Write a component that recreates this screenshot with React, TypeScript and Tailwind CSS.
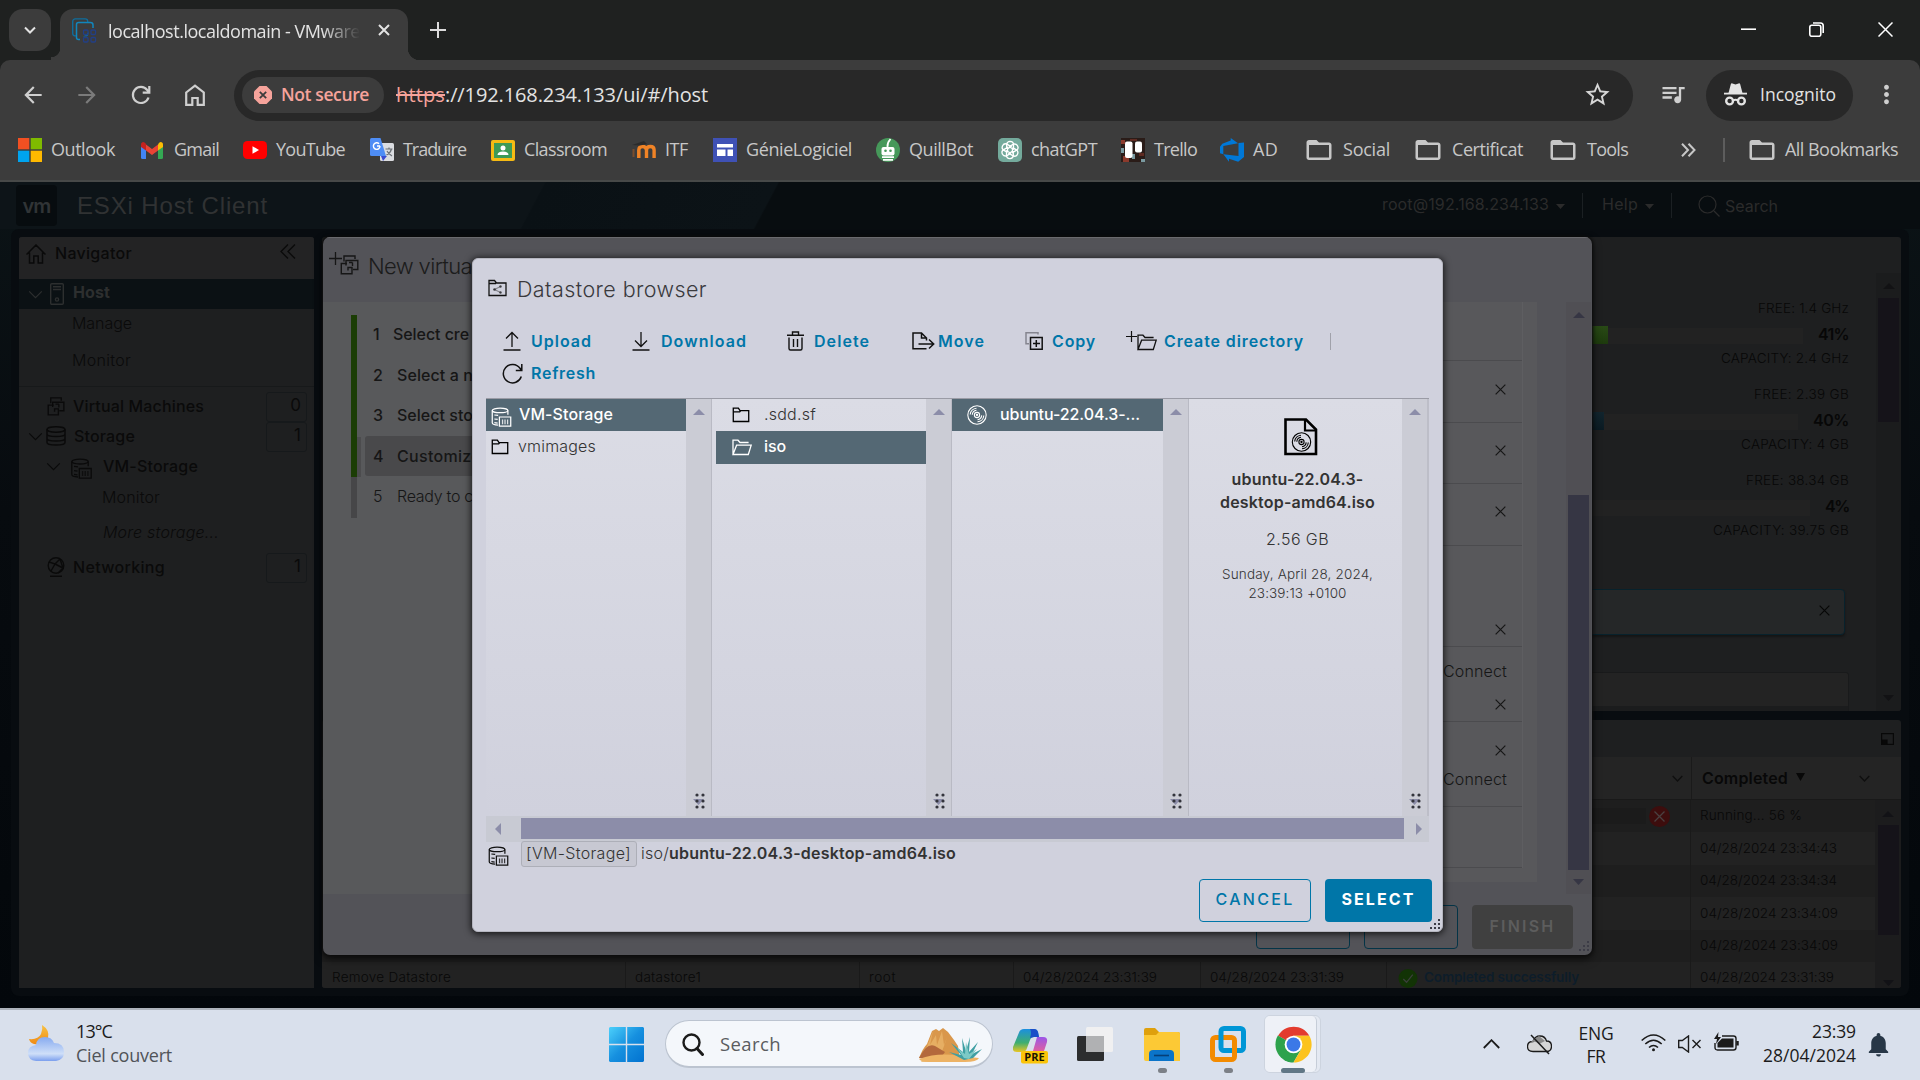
import React, { useLayoutEffect, useRef, useState } from "react";
import { MdArrowBack, MdArrowForward, MdQueueMusic, MdStarBorder, MdFolderOpen, MdMoreVert, MdNotifications } from "react-icons/md";

/* Single-line text tracked so that it spans exactly `w` pixels. */
function T({ w, className = "", children }: { w: number; className?: string; children: React.ReactNode }) {
  const ref = useRef<HTMLSpanElement>(null);
  const [ls, setLs] = useState(0);
  useLayoutEffect(() => {
    const el = ref.current;
    if (!el) return;
    el.style.letterSpacing = "0px";
    const n = (el.textContent || "").length;
    const d = (w - el.getBoundingClientRect().width) / n;
    el.style.letterSpacing = d + "px";
    setLs(d);
  }, [w]);
  return (
    <span ref={ref} className={"inline-block flex-none whitespace-nowrap leading-none " + className} style={{ letterSpacing: ls }}>
      {children}
    </span>
  );
}

type SvgProps = { className?: string; vb?: string; sw?: number; children: React.ReactNode };
function Ico({ className = "", vb = "0 0 20 20", sw = 1.3, children }: SvgProps) {
  return (
    <svg className={"flex-none " + className} viewBox={vb} fill="none" stroke="currentColor" strokeWidth={sw}>
      {children}
    </svg>
  );
}

const XMark = ({ className = "" }: { className?: string }) => (
  <Ico className={className} vb="0 0 12 12" sw={1.3}><path d="M.7.7 11.3 11.3M11.3.7.7 11.3" /></Ico>
);
const Up = ({ className = "" }: { className?: string }) => (
  <svg className={"h-[6px] w-[12px] flex-none " + className} viewBox="0 0 12 6" fill="currentColor"><path d="M6 0 12 6H0z" /></svg>
);
const Down = ({ className = "", size = "h-[6px] w-[11px]" }: { className?: string; size?: string }) => (
  <svg className={"flex-none " + size + " " + className} viewBox="0 0 12 6" preserveAspectRatio="none" fill="currentColor"><path d="M6 6 0 0h12z" /></svg>
);
const Chevron = ({ className = "", sw = 1.3 }: { className?: string; sw?: number }) => (
  <Ico className={className} vb="0 0 16 10" sw={sw}><path d="M1 1.5 8 8.5 15 1.5" /></Ico>
);
const FolderIcon = ({ className = "" }: { className?: string }) => (
  <Ico className={className} vb="0 0 18 17" sw={1.4}><path d="M.8 15.4V1.2h5.4l1.8 2.6h9.2v11.6z" /><path d="M1 5.2h6.6l1-1.3" /></Ico>
);
const OpenFolderIcon = ({ className = "" }: { className?: string }) => (
  <Ico className={className} vb="0 0 20 17" sw={1.3}><path d="M1 15.5V1.2h5l2 2.3h8.6M1 15.5 4.6 6.2h14.6L16.3 15.5z" /></Ico>
);
const DatastoreIcon = ({ className = "" }: { className?: string }) => (
  <Ico className={className} vb="0 0 21 21" sw={1.3}>
    <ellipse cx="9" cy="3.6" rx="8.2" ry="2.4" /><path d="M.8 3.6v13c0 1.3 2.5 2.3 6.2 2.4M17.2 3.6v4.6M3 8.4l4 .5M3 12.6l3.5.5M3 16.4l3.5.5" />
    <path d="M8.3 10.5h11.9v9.7H8.3z" /><path d="M11.6 13v5M14.2 13v5M16.9 13v5" opacity=".8" />
  </Ico>
);
const VmIcon = ({ className = "" }: { className?: string }) => (
  <Ico className={className} vb="0 0 18 20" sw={1.4}>
    <path d="M3.500 6.500V1H14.500V4M5.500 10.500V5.500H17.300V14.500H12.500M12 7.500V11M8.500 7.500H12" /><path d="M6.500 8.500H.8V18.800H11.500V12.500H7.500V15.500" />
  </Ico>
);
const DiscShape = () => (
  <>
    <circle cx="10" cy="10" r="9.2" /><circle cx="10" cy="10" r="2.6" /><circle cx="10" cy="10" r=".6" />
    <path d="M3.2 9.5a6.8 6.8 0 0 1 6.3-6.3M5.3 9.7a4.8 4.8 0 0 1 4.2-4.4M16.8 10.5a6.8 6.8 0 0 1-6.3 6.3M14.7 10.4a4.8 4.8 0 0 1-4.2 4.3" />
  </>
);
const Grip = () => (
  <svg className="h-[10px] w-[10px]" viewBox="0 0 10 10" fill="#3c3c46">
    {[[8, 0], [8, 4], [4, 4], [8, 8], [4, 8], [0, 8]].map(([x, y]) => <rect key={x + "-" + y} x={x} y={y} width="2" height="2" />)}
  </svg>
);

/* ---------------- Browser chrome ---------------- */

function TabStrip() {
  return (
    <div className="flex h-[60px] bg-[#1f2120]">
      <div className="ml-[9px] mt-[9px] flex h-[42px] w-[42px] items-center justify-center rounded-[14px] bg-[#3c3c3c]">
        <Ico className="h-[8px] w-[12px] text-[#e3e3e3]" vb="0 0 12 8" sw={2}><path d="M1 1.5 6 6.5 11 1.5" /></Ico>
      </div>
      <div className="mt-[48px] h-[12px] w-[9px] bg-[radial-gradient(circle_at_0_0,#1f2120_9px,#3c3c3c_9.5px)]" />
      <div className="mt-[9px] flex h-[51px] w-[348px] items-center rounded-t-[13px] bg-[#3c3c3c] pl-[12px] pb-[8px]">
        <svg className="h-[25px] w-[25px] flex-none" viewBox="0 0 25 25" fill="none">
          <rect x=".7" y=".9" width="15" height="17" rx="2.5" stroke="#0f6d9c" strokeWidth="1.4" />
          <path d="M8 21.5H6.500q-2 0-2-2V6.500q0-2 2-2h12q2.500 0 2.500 2.500v3" fill="#3c3c3c" stroke="#1186bd" strokeWidth="1.5" />
          <g stroke="#223f86" strokeWidth="1.300"><rect x="11.500" y="12" width="4.500" height="4.500" rx="1" /><rect x="19" y="12" width="4.500" height="4.500" rx="1" /><rect x="11.500" y="19.500" width="4.500" height="4.500" rx="1" /><rect x="19" y="19.500" width="4.500" height="4.500" rx="1" /></g>
        </svg>
        <div className="ml-[11px] h-[26px] w-[252px] flex-none overflow-hidden pt-[2px] [mask-image:linear-gradient(90deg,#000_85%,transparent)]">
          <T w={252} className="text-[18px] text-[#e3e3e3]">localhost.localdomain - VMware</T>
        </div>
        <Ico className="-mt-[2px] ml-[18px] h-[12px] w-[12px] text-[#e3e3e3]" vb="0 0 12 12" sw={2}><path d="M1 1 11 11M11 1 1 11" /></Ico>
      </div>
      <div className="mt-[48px] h-[12px] w-[12px] bg-[radial-gradient(circle_at_100%_0,#1f2120_12px,#3c3c3c_12.5px)]" />
      <Ico className="ml-[10px] mt-[22px] h-[16px] w-[16px] text-[#dcdcdc]" vb="0 0 16 16" sw={2}><path d="M8 0V16M0 8H16" /></Ico>
      <div className="ml-auto flex h-[60px] items-start pt-[22px] text-white">
        <Ico className="h-[15px] w-[15px]" vb="0 0 15 15" sw={1.6}><path d="M0 7.200H15" /></Ico>
        <Ico className="ml-[53px] h-[15px] w-[15px]" vb="0 0 15 15" sw={1.6}><rect x=".8" y="3.300" width="11" height="11" rx="2" /><path d="M4 1h7.500q2.700 0 2.700 2.700V11" /></Ico>
        <Ico className="ml-[54px] mr-[27px] h-[15px] w-[15px]" vb="0 0 15 15" sw={1.500}><path d="M.5.5 14.500 14.500M14.500.5.5 14.500" /></Ico>
      </div>
    </div>
  );
}

function AddressBar() {
  return (
    <div className="flex h-[70px] items-center rounded-t-[10px] bg-[#3c3c3c]">
      <MdArrowBack className="ml-[20px] h-[26px] w-[26px] text-[#cfcfcf]" />
      <MdArrowForward className="ml-[28px] h-[26px] w-[26px] text-[#7b7b7b]" />
      <Ico className="ml-[31px] h-[20px] w-[20px] text-[#cfcfcf]" vb="0 0 20 20" sw={2.200}><path d="M17.500 12.500A8 8 0 1 1 16.200 5L18 7M18.300 1v6.600h-6.600" /></Ico>
      <Ico className="ml-[34px] h-[22px] w-[20px] text-[#cfcfcf]" vb="0 0 20 22" sw={2.200}><path d="M1.200 8.500 10 1.600 18.800 8.500V20.800H12.700V14H7.300v6.800H1.200z" /></Ico>
      <div className="ml-[29px] flex h-[51px] w-[1399px] items-center rounded-full bg-[#282828] pl-[8px] pr-[21px]">
        <div className="flex h-[36px] w-[142px] items-center rounded-full bg-[#3c3c3c] pl-[12px]">
          <svg className="h-[18px] w-[18px]" viewBox="0 0 18 18"><path d="M5.500 0h7L18 5.500v7L12.500 18h-7L0 12.500v-7z" fill="#f6a39b" /><path d="M5.800 5.800l6.400 6.400M12.200 5.800l-6.400 6.400" stroke="#3c3c3c" strokeWidth="1.800" /></svg>
          <T w={88} className="ml-[9px] text-[17.500px] font-semibold text-[#f6a39b]">Not secure</T>
        </div>
        <T w={49} className="ml-[12px] text-[20px] text-[#f6a39b] line-through decoration-2">https</T>
        <T w={263} className="text-[20px] text-[#e3e3e3]">://192.168.234.133/ui/#/host</T>
        <MdStarBorder className="-mt-[2px] ml-auto h-[29px] w-[29px] text-[#d6d6d6]" />
      </div>
      <MdQueueMusic className="-mt-[2px] ml-[26px] h-[28px] w-[28px] text-[#cfcfcf]" />
      <div className="ml-[19px] flex h-[51px] w-[147px] items-center rounded-full bg-[#282828] pl-[18px]">
        <svg className="-mt-[2px] h-[23px] w-[23px]" viewBox="0 0 23 23" fill="none" stroke="#e3e3e3" strokeWidth="2.400">
          <path d="M4.500 10 6.800 1.200Q7.200 0 8.500.5L11.500 1.500l3-1Q15.800 0 16.200 1.200L18.500 10z" fill="#e3e3e3" stroke="none" />
          <path d="M0 10.600h23" strokeWidth="1.800" /><circle cx="5.600" cy="18" r="3.400" /><circle cx="17.400" cy="18" r="3.400" /><path d="M9 17.500q2.500-1.500 5 0" strokeWidth="1.800" />
        </svg>
        <T w={76} className="ml-[13px] text-[17.500px] text-[#e3e3e3]">Incognito</T>
      </div>
      <MdMoreVert className="-mt-[1px] ml-[19px] h-[29px] w-[29px] text-[#cfcfcf]" />
    </div>
  );
}

const Folder = () => <MdFolderOpen className="-ml-[2px] h-[30px] w-[30px] flex-none text-[#c7c7c7]" />;

const bookmarkIcons: Record<string, React.ReactNode> = {
  Outlook: <svg className="h-6 w-6" viewBox="0 0 24 24"><path fill="#f25022" d="M0 0h11.300v11.300H0z" /><path fill="#7fba00" d="M12.700 0H24v11.300H12.700z" /><path fill="#00a4ef" d="M0 12.700h11.300V24H0z" /><path fill="#ffb900" d="M12.700 12.700H24V24H12.700z" /></svg>,
  Gmail: <svg className="h-[17px] w-[22px]" viewBox="0 0 22 17"><path fill="#4285f4" d="M0 2.500 5 6v11H1.500Q0 17 0 15.500z" /><path fill="#34a853" d="M22 2.500 17 6v11h3.500q1.500 0 1.500-1.500z" /><path fill="#ea4335" d="M5 2.500 11 7l6-4.500V8.500L11 13 5 8.500z" /><path fill="#c5221f" d="M0 2.500Q0 0 2.500 0 4 .3 5 2V8.500L0 5z" /><path fill="#fbbc04" d="M22 2.500Q22 0 19.500 0 18 .3 17 2.500V8.500L22 5z" /></svg>,
  YouTube: <svg className="h-[18px] w-[24px]" viewBox="0 0 24 18"><rect width="24" height="18" rx="4.500" fill="#f00" /><path d="M9.500 5.200v7.600L16 9z" fill="#fff" /></svg>,
  Traduire: <svg className="h-[24px] w-[24px]" viewBox="0 0 24 24"><rect x="10" y="5" width="14" height="18" rx="1.500" fill="#dadce0" /><path d="M11 18h6l-4 5z" fill="#3a4bd0" /><path d="M1.500 0h9L16 18H1.500Q0 18 0 16.500v-15Q0 0 1.500 0z" fill="#4e8df5" /><path d="M10 8H7M10 8a3.300 3.300 0 1 1-1-2.300" stroke="#fff" strokeWidth="1.400" fill="none" /><path d="M15.500 11h7M19 9.500V11M21.500 11q-1 4-5 6M17 13q1.500 3 5 5" stroke="#6b7076" strokeWidth="1.200" fill="none" /></svg>,
  Classroom: <svg className="h-[21px] w-[24px]" viewBox="0 0 24 21"><rect width="24" height="21" rx="2" fill="#f5ba14" /><rect x="3" y="3" width="18" height="15" fill="#3d9a57" /><circle cx="12" cy="8" r="2.500" fill="#fff" /><path d="M6.500 15q0-3.500 5.500-3.500t5.500 3.500z" fill="#fff" /></svg>,
  ITF: <svg className="h-[20px] w-[24px]" viewBox="0 0 24 20" fill="none" stroke="#f08326" strokeWidth="3.400"><path d="M14.500 18V10q0-3.500 3.800-3.500t3.800 3.500v8M14.500 10q-.5-3.500-4-3.500T6.800 10v8" /><path d="M6.800 10v8" strokeWidth="2.500" /><path d="M1.500 9v8" stroke="#7a4d2c" strokeWidth="2" /><path d="M0 5 12 1 15 4 8 5.500z" fill="#2b2b2b" stroke="none" /></svg>,
  "GénieLogiciel": <svg className="h-6 w-6" viewBox="0 0 24 24"><path fill="#3f51b5" d="M0 0h24v24H0z" /><path fill="#fff" d="M4 6h16v3.500H4zM4 11.500h8.500v6.500H4zM14.500 11.500H20v6.500h-5.500z" /></svg>,
  QuillBot: <svg className="h-6 w-6" viewBox="0 0 24 24"><circle cx="12" cy="12" r="12" fill="#46985a" /><rect x="5.500" y="9" width="13" height="8.500" rx="2" fill="#fff" /><path d="M11.500 9Q11 5 14.500 1" stroke="#fff" strokeWidth="1.800" fill="none" /><circle cx="9.500" cy="12.800" r="1.300" fill="#46985a" /><circle cx="14.500" cy="12.800" r="1.300" fill="#46985a" /><path d="M6 19.200h12M7 21.800h10" stroke="#fff" strokeWidth="1.700" /></svg>,
  chatGPT: <svg className="h-6 w-6" viewBox="0 0 24 24"><rect width="24" height="24" rx="5" fill="#74aa9c" /><g fill="none" stroke="#fff" strokeWidth="1.300">{[0, 60, 120, 180, 240, 300].map((a) => <path key={a} transform={`rotate(${a} 12 12)`} d="M12 9.200 15.500 11.200V6.800Q15.500 3.400 12 3.400 9.300 3.600 8.700 6V11" />)}</g></svg>,
  Trello: <svg className="h-6 w-6" viewBox="0 0 24 24"><path fill="#2a1c18" d="M0 0h24v24H0z" /><path d="M0 2h4v4H0zM2 18h6v6H2z" fill="#8c3a2c" /><path d="M9 1h7v2H9zM18 15h5v3h-5z" fill="#5f2b22" /><path d="M0 10h3v5H0zM11 16h3v5h-3zM20 21h4v3h-4z" fill="#7a9aa0" /><rect x="4" y="3.500" width="7.500" height="16.500" rx="2" fill="#fff" /><rect x="14" y="3.500" width="7" height="11" rx="2" fill="#fff" /></svg>,
  AD: <svg className="h-6 w-6" viewBox="0 0 24 24" fill="#0078d7"><path d="M0 8.800 2.300 5.800 10.700 2.500V0L18 5.300 3.300 8.100V16.200L0 15.200zM24 4.500V19l-5.800 4.800-9.200-3V23.800L3.400 16.200 18.500 18V5z" /></svg>,
  Social: <Folder />, Certificat: <Folder />, Tools: <Folder />,
};

function Bookmarks() {
  const items: [string, string, number][] = [
    ["Outlook", "w-[123px]", 64], ["Gmail", "w-[102px]", 45], ["YouTube", "w-[127px]", 69], ["Traduire", "w-[121px]", 63],
    ["Classroom", "w-[141px]", 83], ["ITF", "w-[81px]", 23], ["GénieLogiciel", "w-[163px]", 106], ["QuillBot", "w-[122px]", 64],
    ["chatGPT", "w-[123px]", 66], ["Trello", "w-[99px]", 43], ["AD", "w-[86px]", 25], ["Social", "w-[109px]", 47],
    ["Certificat", "w-[135px]", 71], ["Tools", "w-[131px]", 41],
  ];
  return (
    <div className="flex h-[52px] items-start border-b-2 border-[#474948] bg-[#3c3c3c] pl-[18px] text-[#c7c7c7]">
      {items.map(([name, width, w], i) => (
        <div key={name} className={"flex h-[40px] flex-none items-center " + width}>
          <div className={i > 10 ? "flex w-[37px] flex-none" : "flex w-[33px] flex-none"}>{bookmarkIcons[name]}</div>
          <T w={w} className="pb-[2px] text-[18px]">{name}</T>
        </div>
      ))}
      <div className="flex h-[40px] flex-none items-center">
        <Ico className="h-[14px] w-[15px]" vb="0 0 15 14" sw={2}><path d="M1 .7 7 7 1 13.300M7.500.7 13.500 7 7.500 13.300" /></Ico>
        <div className="ml-[27px] h-[24px] w-[2px] bg-[#5d5d5d]" />
        <div className="ml-[24px] flex w-[36px]"><Folder /></div>
        <T w={113} className="pb-[2px] text-[18px]">All Bookmarks</T>
      </div>
    </div>
  );
}

/* ---------------- ESXi host client ---------------- */

function HostHeader() {
  return (
    <div className="flex h-[47px] items-center bg-[linear-gradient(118deg,#0d1418_0,#0d1418_28%,#0a1115_28.100%,#0c1317_40%,#080d10_40.100%)] text-[#2b2b2b]">
      <div className="ml-[16px] flex h-[41px] w-[41px] items-center justify-center rounded-[4px] bg-[#070c0f]">
        <T w={28} className="font-['Inter'] text-[20px] font-semibold text-[#303436]">vm</T>
      </div>
      <T w={191} className="ml-[20px] font-['Liberation_Sans'] text-[24px] text-[#303233]">ESXi Host Client</T>
      <T w={167} className="-mt-[3px] ml-[1114px] font-['Inter'] text-[16px]">root@192.168.234.133</T>
      <Down className="ml-[7px] mt-[2px]" size="h-[5px] w-[9px]" />
      <div className="ml-[17px] h-[25px] w-px bg-[#1b2023]" />
      <T w={36} className="-mt-[3px] ml-[19px] font-['Inter'] text-[16px]">Help</T>
      <Down className="ml-[7px] mt-[2px]" size="h-[5px] w-[9px]" />
      <div className="ml-[17px] h-[25px] w-px bg-[#1b2023]" />
      <Ico className="ml-[26px] h-[22px] w-[22px]" vb="0 0 22 22" sw={1.200}><circle cx="9.500" cy="9.500" r="8.500" /><path d="M16 16l5.500 5.500" /></Ico>
      <T w={53} className="ml-[5px] font-['Inter'] text-[16px]">Search</T>
    </div>
  );
}

function CountBadge({ n }: { n: string }) {
  return <div className="ml-auto mr-[7px] mt-[2px] flex h-[30px] w-[41px] flex-none items-center justify-end rounded-[3px] border border-[#16191b] pb-[3px] pr-[5px] text-[17px] leading-none text-[#0a0a0a]">{n}</div>;
}

function Navigator() {
  return (
    <div className="w-[295px] flex-none overflow-hidden rounded-t-[3px] bg-[#1e1f20] font-['Inter'] text-[#0a0a0a]">
      <div className="flex h-[42px] items-start bg-[#232324] pl-[7px] pt-[7px]">
        <Ico className="h-[20px] w-[20px]" sw={1.500}><path d="M.5 10.500 10 1l9.500 9.500M3.500 8.500V19h4.300v-7h4.400v7h4.300V8.500" /></Ico>
        <T w={77} className="ml-[9px] mt-[1px] text-[16px] font-medium">Navigator</T>
        <Ico className="ml-[148px] h-[15px] w-[16px]" vb="0 0 16 15" sw={1.300}><path d="M8 .5 1 7.500l7 7M15 .5 8 7.500l7 7" /></Ico>
      </div>
      <div className="flex h-[30px] items-center bg-[#0b1114] pl-[9px] text-[#2d2f2f]">
        <Chevron className="h-[9px] w-[15px]" />
        <Ico className="ml-[7px] h-[22px] w-[14px]" vb="0 0 14 22" sw={1.400}><rect x=".7" y=".7" width="12.600" height="20.600" rx="1" /><path d="M3 3.800h8M3 6.500h8" /><circle cx="7" cy="16.500" r="1.600" /></Ico>
        <T w={37} className="ml-[9px] pb-[5px] text-[16px] font-bold">Host</T>
      </div>
      <div className="flex h-[30px] items-center pb-[2px] pl-[53px]"><T w={60} className="text-[16px] font-light">Manage</T></div>
      <div className="flex h-[48px] items-center border-b border-[#17191a] pb-[6px] pl-[53px]"><T w={59} className="text-[16px] font-light">Monitor</T></div>
      <div className="mt-[4px] flex h-[30px] items-center pl-[28px]">
        <VmIcon className="h-[19px] w-[18px]" /><T w={131} className="ml-[8px] text-[16px] font-medium">Virtual Machines</T><CountBadge n="0" />
      </div>
      <div className="flex h-[30px] items-center pl-[9px]">
        <Chevron className="h-[9px] w-[15px]" />
        <Ico className="ml-[3px] h-[20px] w-[20px]" sw={1.500}><ellipse cx="10" cy="3.500" rx="9" ry="2.700" /><path d="M1 3.500v13q0 2.500 9 2.500t9-2.500v-13M1 8q0 2.500 9 2.500T19 8M1 12.500Q1 15 10 15t9-2.500" /></Ico>
        <T w={61} className="ml-[8px] text-[16px] font-medium">Storage</T><CountBadge n="1" />
      </div>
      <div className="flex h-[30px] items-center pl-[27px]">
        <Chevron className="h-[9px] w-[15px]" /><DatastoreIcon className="ml-[10px] mt-[4px] h-[21px] w-[21px]" />
        <T w={95} className="ml-[11px] text-[16px] font-medium">VM-Storage</T>
      </div>
      <div className="flex h-[31px] items-center pl-[83px]"><T w={58} className="text-[16px] font-light">Monitor</T></div>
      <div className="flex h-[40px] items-center pl-[84px]"><T w={116} className="text-[16px] font-light italic">More storage...</T></div>
      <div className="flex h-[30px] items-center pl-[28px]">
        <Ico className="h-[20px] w-[18px]" vb="0 0 18 20" sw={1.400}><circle cx="9" cy="8.500" r="7.800" /><path d="M2 5l6 2 5-5M8 7l-4 7M8 7l8 4M13 2l3 9-5 5M3 19.300h12" /></Ico>
        <T w={92} className="ml-[8px] text-[16px] font-medium">Networking</T><CountBadge n="1" />
      </div>
    </div>
  );
}

function Stat({ free, fw, pct, pw, cap, cw, fill, track }: { free: string; fw: number; pct: string; pw: number; cap: string; cw: number; fill: string; track: string }) {
  return (
    <div className="mb-[12px] flex flex-none flex-col items-end">
      <div className="flex h-[24px] items-center"><T w={fw} className="text-[13.500px] font-light">{free}</T></div>
      <div className="flex h-[26px] items-center justify-end gap-[15px]">
        <div className={"mt-[4px] flex h-[16px] items-end bg-[#222222] " + track}><div className={"h-[18px] " + fill} /></div>
        <T w={pw} className="text-[16px] font-semibold">{pct}</T>
      </div>
      <div className="flex h-[24px] items-center"><T w={cw} className="text-[13.500px] font-light">{cap}</T></div>
    </div>
  );
}

function HostSummary() {
  return (
    <div className="flex h-[474px] overflow-hidden rounded-[3px] bg-[#1e1f20] font-['Inter'] text-[#070707]">
      <div className="flex w-[1554px] flex-col items-end pr-[27px] pt-[60px]">
        <Stat free="FREE: 1.4 GHz" fw={91} pct="41%" pw={31} cap="CAPACITY: 2.4 GHz" cw={128} track="w-[504px]" fill="w-[309px] bg-[linear-gradient(#294a16,#1d3a0d)]" />
        <Stat free="FREE: 2.39 GB" fw={95} pct="40%" pw={36} cap="CAPACITY: 4 GB" cw={108} track="w-[499px]" fill="w-[305px] bg-[linear-gradient(#12252e,#0b1b23)]" />
        <Stat free="FREE: 38.34 GB" fw={103} pct="4%" pw={24} cap="CAPACITY: 39.75 GB" cw={136} track="w-[504px]" fill="w-[20px] bg-[#2a5214]" />
        <div className="mr-[4px] mt-[34px] flex h-[46px] w-[500px] flex-none items-center justify-end rounded-[4px] border border-[#08222c] bg-[#252728] pr-[14px] shadow-[0_2px_2px_#151617]">
          <XMark className="-mt-[3px] h-[11px] w-[11px]" />
        </div>
        <div className="mt-[37px] flex h-[60px] w-[500px] flex-none rounded-tr-[3px] border border-[#191a1b] bg-[linear-gradient(#232323_33px,#1b1c1d_33px)]" />
      </div>
      <div className="mt-[36px] flex w-[25px] flex-col items-center bg-[#1b1c1d] text-[#121214]">
        <Up className="mt-[10px]" /><div className="mt-[9px] h-[124px] w-[21px] bg-[#151319]" /><Down className="mb-[10px] mt-auto" />
      </div>
    </div>
  );
}

function RecentTasks() {
  const rows = ["Running... 56 %", "04/28/2024 23:34:43", "04/28/2024 23:34:34", "04/28/2024 23:34:09", "04/28/2024 23:34:09", "04/28/2024 23:31:39"];
  const cell = "flex h-full flex-none items-center border-r border-[#1a1a1a] ";
  return (
    <div className="h-[268px] overflow-hidden rounded-[3px] bg-[#1e1f20] font-['Inter'] text-[#080808]">
      <div className="flex h-[37px] items-center justify-end pr-[7px]">
        <Ico className="h-[12px] w-[13px]" vb="0 0 13 12" sw={1.200}><path d="M.6.6h11.800v10.800H.6z" /><path d="M1 7h5v4H1z" fill="currentColor" /></Ico>
      </div>
      <div className="flex h-[43px] items-center border-b border-[#191919] bg-[#242424]">
        <div className="flex h-full w-[1370px] items-center justify-end border-r border-[#1a1a1a] pr-[8px]"><Chevron sw={2} className="h-[7px] w-[11px] text-[#0f0f0f]" /></div>
        <T w={86} className="ml-[10px] text-[16px] font-semibold">Completed</T>
        <Down className="-mt-[2px] ml-[8px]" size="h-[8px] w-[9px]" />
        <Chevron sw={2} className="ml-[54px] h-[7px] w-[11px] text-[#0f0f0f]" />
      </div>
      <div className="flex">
        <div className="w-[1553px]">
          {rows.map((r, i) => (
            <div key={i} className={"flex h-[32.400px] text-[13.500px] font-light " + (i % 2 ? "bg-[#222222]" : "bg-[#1e1e1e]")}>
              {i === 5 ? (
                <>
                  <div className={cell + "w-[304px] pl-[10px]"}><T w={119}>Remove Datastore</T></div>
                  <div className={cell + "w-[234px] pl-[9px]"}><T w={66}>datastore1</T></div>
                  <div className={cell + "w-[154px] pl-[9px]"}><T w={27}>root</T></div>
                  <div className={cell + "w-[187px] pl-[9px]"}><T w={134}>04/28/2024 23:31:39</T></div>
                  <div className={cell + "w-[186px] pl-[9px]"}><T w={134}>04/28/2024 23:31:39</T></div>
                  <div className={cell + "w-[304px] pl-[11px]"}>
                    <svg className="h-[19px] w-[20px]" viewBox="0 0 20 20"><circle cx="10" cy="10" r="10" fill="#123305" /><path d="M5 10.500 8.500 14 15 6" stroke="#3b3f3b" strokeWidth="1.400" fill="none" /></svg>
                    <T w={155} className="ml-[6px] font-semibold text-[#0d1d2a]">Completed successfully</T>
                  </div>
                </>
              ) : (
                <div className={cell + "w-[1369px] justify-end pr-[20px]"}>
                  {i === 0 && <div className="mr-[3px] h-[16px] w-[200px] bg-[#1b1b1b]" />}
                  {i === 0 && <svg className="h-[21px] w-[21px]" viewBox="0 0 21 21"><circle cx="10.500" cy="10.500" r="10.500" fill="#3d0d0d" /><path d="M5.500 5.500l10 10M15.500 5.500l-10 10" stroke="#4a4040" strokeWidth="1.300" /></svg>}
                </div>
              )}
              <div className="flex items-center pl-[9px]"><T w={[102, 137, 137, 138, 138, 134][i]}>{r}</T></div>
            </div>
          ))}
        </div>
        <div className="flex h-[188px] w-[26px] flex-col items-center bg-[#1c1c1d] text-[#121216]">
          <Up className="mt-[11px]" /><div className="mt-[8px] h-[110px] w-[21px] bg-[#151319]" /><Down className="mb-[2px] mt-auto" />
        </div>
      </div>
    </div>
  );
}

function Wizard() {
  const steps: [string, number, string][] = [["1", 76, "Select cre"], ["2", 76, "Select a n"], ["3", 76, "Select sto"], ["4", 84, "Customize"], ["5", 76, "Ready to c"]];
  const row = "flex w-full flex-none flex-col items-end border-b border-[#4b4b4e] pr-[16px] ";
  const x = <XMark className="h-[11px] w-[11px]" />;
  return (
    <div className="absolute left-[323px] top-[55px] h-[718px] w-[1269px] overflow-hidden rounded-[7px] bg-[#535358] font-['Inter'] text-[#161616] shadow-[0_0_3px_1px_#0c0c0c,0_4px_10px_#0009]">
      <div className="flex h-[65px] items-start border-t border-[#6a6a6e] pl-[6px] pt-[14px]">
        <Ico className="h-[13px] w-[13px]" vb="0 0 13 13" sw={1.300}><path d="M6.500 0V13M0 6.500H13" /></Ico>
        <VmIcon className="-ml-[2px] mt-[3px] h-[20px] w-[19px]" />
        <T w={104} className="ml-[9px] mt-[3px] text-[22px] font-light text-[#1c1c1c]">New virtua</T>
      </div>
      <div className="flex h-[592px]">
        <div className="flex w-[900px] flex-none bg-[#58595b] pl-[28px]">
          <div className="mt-[13px] h-[203px] w-[6px] bg-[linear-gradient(#1b3d05_0,#1b3d05_162px,#464648_162px)]" />
          <div className="mt-[135px] h-[40px] w-[4px] bg-[#4c4c4e]" />
          <div className="ml-[4px] mt-[12px] w-[200px]">
            {steps.map(([n, w, label], i) => (
              <div key={n} className={"flex h-[40.500px] items-center rounded-[3px] pl-[8px] text-[16px] " + (i === 3 ? "bg-[#49494b] font-medium" : i === 4 ? "font-light" : "font-medium")}>
                <span className={i === 0 ? "w-[20px] leading-none" : "w-[24px] leading-none"}>{n}</span>
                <T w={w}>{label}</T>
              </div>
            ))}
          </div>
        </div>
        <div className="h-[580px] w-[314px] flex-none bg-[#58585b] pr-[14px]">
          <div className="flex h-[566px] flex-col border-r border-[#5e5e61]">
            <div className={row + "h-[59px]"} />
            <div className={row + "h-[62px] pt-[23px]"}>{x}</div>
            <div className={row + "h-[61px] pt-[22px]"}>{x}</div>
            <div className={row + "h-[62px] pt-[22px]"}>{x}</div>
            <div className={row + "h-[101px] pt-[78px]"}>{x}</div>
            <div className={row + "h-[75px] pt-[16px]"}><T w={64} className="-mr-[1px] text-[16px] font-light">Connect</T><XMark className="mt-[20px] h-[11px] w-[11px]" /></div>
            <div className={row + "h-[85px] pt-[23px]"}>{x}<T w={64} className="-mr-[1px] mt-[15px] text-[16px] font-light">Connect</T></div>
            <div className={row + "h-[61px]"} />
          </div>
        </div>
        <div className="w-[29px]" />
        <div className="flex w-[25px] flex-col items-center bg-[#504f54] text-[#363644]">
          <Up className="mt-[10px]" /><div className="mt-[177px] h-[375px] w-[21px] bg-[#363644]" /><Down className="mt-[9px]" />
        </div>
      </div>
      <div className="flex h-[61px] items-start pl-[933px] pt-[11px]">
        <div className="h-[44px] w-[94px] rounded-[4px] border border-[#043447]" />
        <div className="ml-[14px] h-[44px] w-[94px] rounded-[4px] border border-[#043447]" />
        <div className="ml-[14px] flex h-[44px] w-[101px] items-center justify-center rounded-[4px] bg-[#404040]"><T w={66} className="pb-[2px] text-[16px] font-semibold text-[#5d5d5d]">FINISH</T></div>
        <div className="ml-[6px] mt-[36px]"><Grip /></div>
      </div>
    </div>
  );
}

function ColumnScroll() {
  return (
    <div className="flex h-full w-[25px] flex-none flex-col items-center bg-[#cbccd5] text-[#8c8da9]">
      <Up className="mt-[10px]" />
      <div className="relative mb-[7px] mt-auto flex h-[16px] w-[25px] justify-center">
        <Down className="mt-[6px]" />
        <svg className="absolute left-[9px] top-0 h-[16px] w-[10px]" viewBox="0 0 10 16" fill="#33343c">
          {[2, 8, 14].map((y) => <g key={y}><circle cx="2" cy={y} r="1.600" /><circle cx="8" cy={y} r="1.600" /></g>)}
        </svg>
      </div>
    </div>
  );
}

function DatastoreBrowser() {
  const sel = "flex items-center bg-[#546874] text-white ";
  const col = "h-full bg-[linear-gradient(#dbdce5,#d0d1dd)] ";
  const link = "text-[16px] font-semibold text-[#0076a8]";
  return (
    <div className="absolute left-[472px] top-[76px] h-[674px] w-[971px] overflow-hidden rounded-[6px] border border-[#b5b6c0] bg-[#d0d1dd] pl-[13px] font-['Inter'] text-[#333] shadow-[0_1px_7px_1px_#000b]">
      <div className="flex h-[61px] items-center pl-[2px]">
        <Ico className="-mt-[3px] h-[18px] w-[19px] text-[#111]" vb="0 0 19 18" sw={1.300}><path d="M1 16.500V1.500h5.500l2 2.500H18v12.500zM1 4.500h7" /><path d="M12.500 7.500 6.500 10.500l6 3" opacity=".4" strokeWidth="1.200" /><g fill="#111" opacity=".7" stroke="none"><circle cx="12.500" cy="7.500" r="1.200" /><circle cx="12.500" cy="13.500" r="1.200" /><circle cx="6.500" cy="10.500" r="1.300" /></g></Ico>
        <T w={190} className="ml-[10px] text-[21.500px] font-light text-[#3a3a3d]">Datastore browser</T>
      </div>
      <div className="flex h-[42px] items-center pl-[17px] text-[#111]">
        <div className="flex w-[129px] items-center"><div className="w-[28px]"><Ico className="h-[20px] w-[18px]" vb="0 0 18 20"><path d="M9 16V1.500M3 7.500 9 1.500l6 6M.5 19h17" /></Ico></div><T w={61} className={link}>Upload</T></div>
        <div className="flex w-[155px] items-center"><div className="w-[29px]"><Ico className="h-[20px] w-[18px]" vb="0 0 18 20"><path d="M9 1v14.500M3 9.500l6 6 6-6M.5 19h17" /></Ico></div><T w={86} className={link}>Download</T></div>
        <div className="flex w-[125px] items-center"><div className="w-[27px]"><Ico className="h-[20px] w-[17px]" vb="0 0 17 20" sw={1.400}><path d="M0 4.200h17M5.500 4V1h6v3M2 6.500V17.500q0 1.500 1.500 1.500h10q1.500 0 1.500-1.500V6.500M6.500 8v8M10.500 8v8" /></Ico></div><T w={56} className={link}>Delete</T></div>
        <div className="flex w-[113px] items-center"><div className="w-[26px]"><Ico className="h-[18px] w-[23px]" vb="0 0 23 18" sw={1.500}><path d="M14.500 16.800H1V1h8.500l5 5v2.500M9.500 1v5h5M6.500 12h15M17 7.500l4.700 4.500L17 16.500" /></Ico></div><T w={47} className={link}>Move</T></div>
        <div className="flex w-[101px] items-center"><div className="w-[27px]"><Ico className="h-[18px] w-[18px]" vb="0 0 18 18" sw={1.500}><path d="M13 2.500V.8H1v11h3" stroke="#85858f" /><path d="M5.500 5.500h11.700v11.700H5.500zM11.300 8v7M8 11.500h7" /></Ico></div><T w={44} className={link}>Copy</T></div>
        <div className="flex w-[204px] items-center">
          <div className="flex w-[38px]"><Ico className="-mt-[1px] h-[11px] w-[11px]" vb="0 0 11 11" sw={1.200}><path d="M5.500 0V11M0 5.500H11" /></Ico><OpenFolderIcon className="mt-[2px] h-[17px] w-[20px]" /></div>
          <T w={140} className={link}>Create directory</T>
        </div>
        <div className="h-[17px] w-px bg-[#a0a1aa]" />
      </div>
      <div className="mb-[14px] flex h-[22px] items-center pl-[16px] text-[#111]">
        <div className="w-[29px]"><Ico className="h-[21px] w-[21px]" vb="0 0 21 21" sw={1.500}><path d="M19.300 13.500A9.200 9.200 0 1 1 18 5.300l1.500 2M19.800 1v6.500h-6" /></Ico></div>
        <T w={65} className={link}>Refresh</T>
      </div>
      <div className="flex h-[418px] w-[943px] border-t border-[#9a9ba5] bg-[#d0d1dd]">
        <div className={col + "w-[200px]"}>
          <div className={sel + "h-[32px] pl-[5px]"}><DatastoreIcon className="mt-[3px] h-[20px] w-[21px]" /><T w={94} className="ml-[7px] pb-[2px] text-[16px] font-medium">VM-Storage</T></div>
          <div className="flex h-[32px] items-center pl-[5px]"><FolderIcon className="h-[16px] w-[18px] text-black" /><T w={78} className="ml-[9px] pb-[2px] text-[16px] font-light">vmimages</T></div>
        </div>
        <ColumnScroll />
        <div className={col + "w-[5px] border-l border-[#b9bac4]"} />
        <div className={col + "w-[210px]"}>
          <div className="flex h-[32px] items-center pl-[16px]"><FolderIcon className="h-[16px] w-[18px] text-black" /><T w={52} className="ml-[14px] pb-[2px] text-[16px] font-light">.sdd.sf</T></div>
          <div className={sel + "h-[33px] pl-[16px]"}><OpenFolderIcon className="h-[17px] w-[20px]" /><T w={22} className="ml-[12px] pb-[3px] text-[16px] font-medium">iso</T></div>
        </div>
        <ColumnScroll />
        <div className={col + "w-[212px] border-l border-[#b9bac4]"}>
          <div className={sel + "h-[32px] pl-[15px]"}><Ico className="h-[20px] w-[20px]" sw={1.100}><DiscShape /></Ico><T w={140} className="ml-[13px] pb-[2px] text-[16px] font-medium">ubuntu-22.04.3-...</T></div>
        </div>
        <ColumnScroll />
        <div className={col + "flex w-[214px] flex-col items-center border-l border-[#b9bac4] pl-[4px]"}>
          <svg className="ml-[6px] mt-[19px] h-[38px] w-[34px] flex-none" viewBox="0 0 34 38" fill="none" stroke="#000">
            <path d="M1.500 1.500H22L32 11.500V36H1.500z" strokeWidth="2.600" /><path d="M21 2v10.500h11" strokeWidth="2.200" />
            <g transform="translate(7.500 14)" strokeWidth="1.100"><DiscShape /></g>
          </svg>
          <T w={132} className="mt-[15px] text-[16px] font-semibold">ubuntu-22.04.3-</T>
          <T w={155} className="mt-[7px] text-[16px] font-semibold">desktop-amd64.iso</T>
          <T w={63} className="mt-[21px] text-[16px] font-light">2.56 GB</T>
          <T w={151} className="mt-[21px] text-[13.500px] font-light">Sunday, April 28, 2024,</T>
          <T w={98} className="mt-[5px] text-[13.500px] font-light">23:39:13 +0100</T>
        </div>
        <ColumnScroll />
        <div className="h-full w-[2px] flex-none bg-[#bdbec8]" />
      </div>
      <div className="flex h-[26px] w-[943px] items-center bg-[#c8cad3] text-[#8c8da9]">
        <svg className="ml-[9px] h-[12px] w-[6px]" viewBox="0 0 6 12" fill="currentColor"><path d="M6 0v12L0 6z" /></svg>
        <div className="-mt-[2px] ml-[20px] h-[21px] w-[883px] bg-[#8c8da9]" />
        <svg className="ml-[12px] h-[12px] w-[6px]" viewBox="0 0 6 12" fill="currentColor"><path d="M0 0v12l6-6z" /></svg>
      </div>
      <div className="-mt-px flex h-[26px] items-center pl-[2px]">
        <DatastoreIcon className="mt-[3px] h-[20px] w-[21px] text-[#111]" />
        <div className="ml-[12px] flex h-[26px] w-[116px] items-center rounded-[3px] border border-[#adafb8] bg-[#c7c8d2] pb-[2px] pl-[4px]"><T w={105} className="text-[16px] font-light">[VM-Storage]</T></div>
        <T w={28} className="ml-[4px] pb-[2px] text-[16px] font-light">iso/</T>
        <T w={287} className="pb-[2px] text-[16px] font-semibold">ubuntu-22.04.3-desktop-amd64.iso</T>
      </div>
      <div className="mt-[12px] flex h-[43px] justify-end pr-[2px]">
        <div className="flex w-[112px] items-center justify-center rounded-[4px] border border-[#0076a8] pb-[3px]"><T w={79} className="text-[16px] font-medium text-[#0076a8]">CANCEL</T></div>
        <div className="ml-[14px] flex w-[107px] items-center justify-center rounded-[4px] bg-[#0076a8] pb-[4px]"><T w={74} className="text-[16px] font-bold text-white">SELECT</T></div>
        <div className="-ml-[2px] mt-[40px]"><Grip /></div>
      </div>
    </div>
  );
}

/* ---------------- Taskbar ---------------- */

function Taskbar() {
  return (
    <div className="flex h-[72px] items-start border-t-2 border-[#adb3bb] bg-[#d9e0ec] text-[#1b1b1b]">
      <svg className="ml-[28px] mt-[15px] h-[37px] w-[37px]" viewBox="0 0 37 37">
        <defs>
          <linearGradient id="moon" x1="0" y1="0" x2="0" y2="1"><stop offset="0" stopColor="#f7c244" /><stop offset="1" stopColor="#f08a14" /></linearGradient>
          <linearGradient id="cloud" x1="0" y1="0" x2="0" y2="1"><stop offset="0" stopColor="#86aaf0" /><stop offset=".7" stopColor="#cfdff8" /><stop offset="1" stopColor="#7b9fee" /></linearGradient>
        </defs>
        <path d="M14 0q8 5 6 13-5 8-14 6-4-1-5-5 9 1 12-5 2-5 1-9z" fill="url(#moon)" />
        <path d="M8 36q-8-1-8-8t8-8q1-8 9-8 7 0 9 6 10 0 10 9 0 8-8 9z" fill="url(#cloud)" />
      </svg>
      <div className="ml-[11px] flex w-[533px] flex-col items-start pt-[12px]">
        <T w={36} className="text-[18px]">13°C</T>
        <T w={96} className="mt-[6px] text-[18px] text-[#505358]">Ciel couvert</T>
      </div>
      <svg className="mt-[17px] h-[35px] w-[35px]" viewBox="0 0 35 35">
        <defs><linearGradient id="win" x1="0" y1="0" x2="1" y2="1"><stop offset="0" stopColor="#4cd0fb" /><stop offset=".5" stopColor="#1690df" /><stop offset="1" stopColor="#0272d0" /></linearGradient></defs>
        <path d="M1 0h15.800v16.800H0V1zM18.200 0H34l1 1v15.800H18.200zM0 18.200h16.800V35H1l-1-1zM18.200 18.200H35V34l-1 1H18.200z" fill="url(#win)" />
      </svg>
      <div className="ml-[21px] mt-[10px] flex h-[48px] w-[328px] items-center rounded-full border border-b-2 border-[#bcc4d0] bg-[#f4f7fb] pl-[16px]">
        <Ico className="mt-[1px] h-[23px] w-[22px]" vb="0 0 22 23" sw={2.400}><circle cx="9.500" cy="9.500" r="8" /><path d="M15 15.500 20.500 21.500" strokeWidth="3" strokeLinecap="round" /></Ico>
        <T w={61} className="ml-[16px] mt-[2px] text-[18.500px] text-[#5a5c60]">Search</T>
        <svg className="ml-[138px] mt-[2px] h-[34px] w-[63px]" viewBox="0 0 63 34">
          <path d="M0 30Q4 20 8 16L13 3l4-2 3 2 4-3 5 4 6 8 4 6 2 14z" fill="#d9974b" /><path d="M14 3l-3 14 6-10 1 10 5-14 2 14 4-10-8 22-20 8z" fill="#e8b469" opacity=".8" />
          <path d="M0 30q8-16 16-12l10 6-6 8z" fill="#b3683c" /><path d="M0 31q20-7 40-3l20 2q-2 4-14 4H10q-8 0-10-3z" fill="#edb365" />
          <path d="M45 32 30 24l12 3L32 15l12 9-1-14 4 13 4-14-1 15 9-10-6 12 10-5-9 9z" fill="#3f9fa3" /><path d="M45 30 38 20l8 6 1-12 3 12 8-5-8 10z" fill="#7ccac6" />
        </svg>
      </div>
      <svg className="ml-[20px] mt-[19px] h-[36px] w-[35px]" viewBox="0 0 35 36">
        <defs>
          <linearGradient id="cpa" x1="0" y1="0" x2="0" y2="1"><stop offset="0" stopColor="#1b8fe0" /><stop offset=".6" stopColor="#3fae6f" /><stop offset="1" stopColor="#e9c523" /></linearGradient>
          <linearGradient id="cpb" x1="0" y1="0" x2="0" y2="1"><stop offset="0" stopColor="#9a55e8" /><stop offset="1" stopColor="#f2628c" /></linearGradient>
        </defs>
        <path d="M6 3.500Q7 0 11 0h10q3 0 4 3l1 5h-5q-3 0-4 3l-3 8q-1 4-5 4H4q-5 0-4-5z" fill="url(#cpa)" /><path d="M17 0h4q3 0 4 3l1 5h-5l-4 1q2-6 0-9z" fill="#1a4fc8" />
        <path d="M24 8h6q5 0 4 5l-3 9q-1 4-5 4H16q3-1 4-4z" fill="url(#cpb)" />
        <rect x="8" y="22" width="27" height="12.500" rx="2" fill="#fbc40a" />
        <text x="21.500" y="32.300" textAnchor="middle" fontSize="11" fontWeight="700" fontFamily="Open Sans, sans-serif" fill="#1a1400">PRE</text>
      </svg>
      <svg className="ml-[29px] mt-[17px] h-[35px] w-[36px]" viewBox="0 0 36 35"><rect y="9" width="27" height="25" rx="1.500" fill="#2c2d2e" /><rect x="9" y="0" width="27" height="25" rx="1.500" fill="#f1f1f1" opacity=".93" /><path d="M9 9h18v16H9z" fill="#b0b1b3" /></svg>
      <div className="ml-[31px] mt-[18px] flex w-[36px] flex-col items-center">
        <svg className="h-[33px] w-[36px]" viewBox="0 0 36 33"><path d="M0 2q0-2 2-2h9l4 4H34q2 0 2 2v5H0z" fill="#dfa00c" /><path d="M0 7h12l3-3h19q2 0 2 2v27H2q-2 0-2-2z" fill="#fcc935" /><path d="M5 33V26q0-4 4-4H26q4 0 4 4v7z" fill="#0b74c9" /><path d="M10 27.500H25" stroke="#063f77" strokeWidth="1.600" /></svg>
        <div className="mt-[7px] h-[5px] w-[9px] rounded-full bg-[#7c8087]" />
      </div>
      <div className="ml-[30px] mt-[16px] flex w-[36px] flex-col items-center">
        <svg className="h-[36px] w-[36px]" viewBox="0 0 36 36" fill="none" strokeWidth="5"><rect x="2.500" y="11.500" width="22" height="22" rx="3" stroke="#f38b00" /><rect x="11" y="2.500" width="22.500" height="22" rx="3" stroke="#0096d6" /><path d="M24.500 18v9" stroke="#f38b00" /></svg>
        <div className="mt-[6px] h-[5px] w-[9px] rounded-full bg-[#7c8087]" />
      </div>
      <div className="ml-[18px] mt-[5px] flex h-[58px] w-[57px] flex-col items-start rounded-[6px] border border-[#cdd4df] bg-[#e4e9f2]">
        <div className="flex h-[56px] w-[52px] flex-col items-center rounded-[5px] border-r border-[#c6cdd8] bg-[#eef1f7] pl-[5px] pt-[10px]">
          <svg className="h-[37px] w-[37px] flex-none" viewBox="0 0 48 48"><path d="M24 24 4 12.500A23.500 23.500 0 0 1 44.500 12.500H24z" fill="#e33b2e" /><path d="M24 24 3.700 12.300A23.500 23.500 0 0 0 24 47.500L34 30z" fill="#2da24c" /><path d="M24 12.500h20.500A23.500 23.500 0 0 1 24 47.500L34 30z" fill="#fcc31e" /><circle cx="24" cy="24" r="11.500" fill="#fff" /><circle cx="24" cy="24" r="9" fill="#3b78e7" /></svg>
          <div className="mt-[5px] h-[5px] w-[24px] flex-none rounded-full bg-[#617786]" />
        </div>
      </div>
      <Ico className="ml-[162px] mt-[29px] h-[10px] w-[17px]" vb="0 0 17 10" sw={1.800}><path d="M.8 9 8.500 1.200 16.200 9" /></Ico>
      <svg className="ml-[27px] mt-[24px] h-[21px] w-[25px]" viewBox="0 0 25 21"><path d="M6 17.500q-5.500 0-5.500-5T6 7.500Q8 2 13 2t6.500 5q5 0 5 5.200t-5 5.300z" fill="#d6d6d6" stroke="#1b1b1b" strokeWidth="1.300" /><path d="M3 9q5-3 9 1l6-3-6-5-5 3z" fill="#8a8a8a" /><path d="M4 1 22 20" stroke="#1b1b1b" strokeWidth="1.500" /></svg>
      <div className="ml-[26px] flex w-[36px] flex-col items-center pt-[15px]"><T w={35} className="text-[17.500px]">ENG</T><T w={19} className="mt-[5px] text-[17.500px]">FR</T></div>
      <Ico className="ml-[27px] mt-[24px] h-[18px] w-[25px]" vb="0 0 25 18" sw={1.600}><path d="M.7 6.500Q12.500-4.500 24.300 6.500M4.300 10q8.200-7.500 16.400 0M8 13.500q4.500-4 9 0" /><circle cx="12.500" cy="15.800" r="1.500" fill="currentColor" stroke="none" /></Ico>
      <Ico className="ml-[12px] mt-[25px] h-[18px] w-[23px]" vb="0 0 23 18" sw={1.400}><path d="M.7 5.500h3.600L10.500 1v16L4.300 12.500H.7zM14.500 5l8 8M22.500 5l-8 8" /></Ico>
      <Ico className="ml-[13px] mt-[22px] h-[20px] w-[25px]" vb="0 0 25 20" sw={1.400}><path d="M8 4h11.500q2.500 0 2.500 2.500v9q0 2.500-2.500 2.500h-16Q1 18 1 15.500V11" /><path d="M8 6.500h11.500v9h-16V11z" fill="currentColor" stroke="none" /><path d="M23.500 9v4.500" strokeWidth="2.500" /><path d="M4.500 0 0 7h3l-1 5 5-7H4z" fill="currentColor" stroke="none" /></Ico>
      <div className="ml-[24px] flex w-[93px] flex-col items-end pt-[13px]"><T w={44} className="text-[17.500px]">23:39</T><T w={93} className="mt-[6px] text-[17.500px]">28/04/2024</T></div>
      <MdNotifications className="ml-[8px] mt-[20px] h-[29px] w-[29px] text-[#283747]" />
    </div>
  );
}

export default function App() {
  return (
    <div className="flex h-[1080px] w-[1920px] flex-col overflow-hidden bg-[#1f2120] font-['Open_Sans',sans-serif]">
      <TabStrip />
      <AddressBar />
      <Bookmarks />
      <div className="relative h-[826px] overflow-hidden bg-[linear-gradient(#0b1316,#070b0f_40%,#03070b)]">
        <HostHeader />
        <div className="ml-[11px] flex h-[767px] w-[1898px] gap-[8px] rounded-[8px] bg-[#080c10] p-[8px]">
          <Navigator />
          <div className="flex w-[1579px] flex-col gap-[9px]">
            <HostSummary />
            <RecentTasks />
          </div>
        </div>
        <Wizard />
        <DatastoreBrowser />
      </div>
      <Taskbar />
    </div>
  );
}
